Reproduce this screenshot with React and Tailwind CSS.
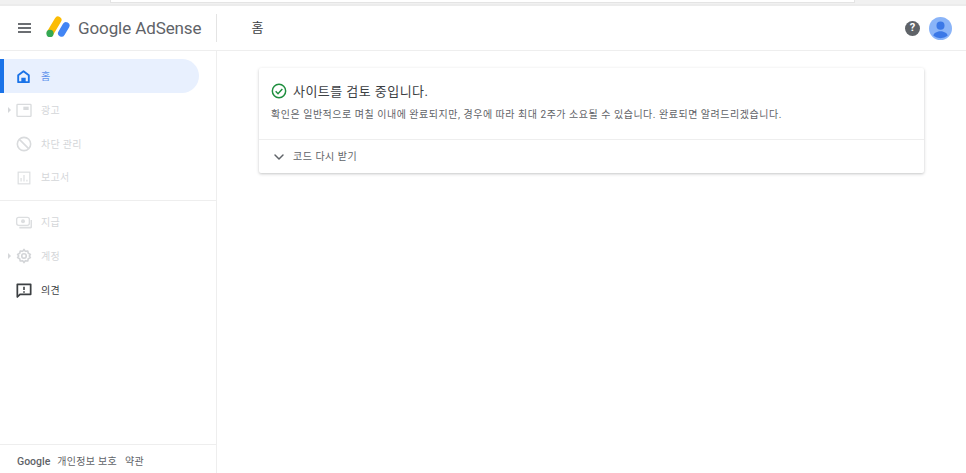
import React from 'react';
import { ChevronDown } from 'lucide-react';

const NavItem = ({ icon, label, arrow, dark, className = '' }) => (
  <div className={`flex items-center h-[34px] relative ${className}`}>
    {arrow && <span className="absolute left-[8px] top-[14px] w-0 h-0 border-y-[3px] border-y-transparent border-l-[3px] border-l-[#d5d7da]" />}
    <span className="w-[47px] flex justify-center shrink-0">{icon}</span>
    <span className={`text-[10px] tracking-[0.3px] ml-[-6px] ${dark ? 'text-[#3c4043]' : 'text-[#d4d6d9]'}`}>{label}</span>
  </div>
);

const HomeIcon = () => (
  <svg width="15" height="15" viewBox="0 0 24 24" fill="none" stroke="#1a73e8" strokeWidth="3">
    <path d="M3.5 21V10L12 3.5 20.5 10V21H3.5Z" strokeLinejoin="round" />
    <path d="M8.5 21v-7h7v7" fill="#1a73e8" stroke="none" />
  </svg>
);

const AdsIcon = () => (
  <svg width="16" height="16" viewBox="0 0 24 24" fill="none">
    <rect x="1.5" y="3.5" width="21" height="18" stroke="#d9dbdd" strokeWidth="2" rx="1" />
    <rect x="11" y="7" width="8" height="5" fill="#d9dbdd" />
  </svg>
);

const BlockIcon = () => (
  <svg width="16" height="16" viewBox="0 0 24 24" fill="none" stroke="#d9dbdd" strokeWidth="2.4">
    <circle cx="12" cy="12" r="10" />
    <path d="M5 5l14 14" />
  </svg>
);

const ReportIcon = () => (
  <svg width="14" height="14" viewBox="0 0 24 24" fill="none" stroke="#dcdee0" strokeWidth="2">
    <rect x="2" y="2" width="20" height="20" />
    <path d="M7 18v-6M12 18V7M17 18v-3" />
  </svg>
);

const PayIcon = () => (
  <svg width="16" height="16" viewBox="0 0 24 24" fill="none">
    <rect x="1" y="5" width="19" height="12" rx="3" stroke="#dcdee0" strokeWidth="2" />
    <circle cx="10.5" cy="11" r="3" fill="#dcdee0" />
    <path d="M5 20.5h16.5a1.5 1.5 0 0 0 1.5-1.5V9" stroke="#dcdee0" strokeWidth="2.4" />
  </svg>
);

const GearIcon = () => (
  <svg width="16" height="16" viewBox="0 0 24 24" fill="none" stroke="#d3d5d8" strokeWidth="2.4">
    <path d="M12 2l2 3 3.6-.6.8 3.4 3.2 1.7L20 12l1.6 2.5-3.2 1.7-.8 3.4-3.6-.6-2 3-2-3-3.6.6-.8-3.4-3.2-1.7L4 12 2.4 9.5l3.2-1.7.8-3.4 3.6.6 2-3Z" strokeLinejoin="round" />
    <circle cx="12" cy="12" r="3.4" />
  </svg>
);

const FeedbackIcon = () => (
  <svg width="16" height="16" viewBox="0 0 24 24" fill="none">
    <path d="M2 3.5h20v15H6l-4 4v-19Z" stroke="#3c4043" strokeWidth="2.6" strokeLinejoin="round" />
    <path d="M12 7v5M12 14v2" stroke="#3c4043" strokeWidth="2.4" />
  </svg>
);

const AdsenseLogo = () => (
  <svg width="24" height="22" viewBox="0 0 24 22">
    <path d="M4.5 16.5 12 4" stroke="#fbbc04" strokeWidth="7" strokeLinecap="round" />
    <path d="M15.5 17.2l4.5-7.6" stroke="#4285f4" strokeWidth="7" strokeLinecap="round" />
    <circle cx="4" cy="17.4" r="3.6" fill="#34a853" />
  </svg>
);

const CheckCircle = () => (
  <svg width="16" height="16" viewBox="0 0 24 24" fill="none" stroke="#1e8e3e" strokeWidth="2.2">
    <circle cx="12" cy="12" r="10" />
    <path d="M7 12.5l3.5 3.5L17 9" />
  </svg>
);

const Avatar = () => (
  <svg width="23" height="23" viewBox="0 0 24 24">
    <circle cx="12" cy="12" r="12" fill="#8ab4f8" />
    <circle cx="12" cy="9" r="4.2" fill="#3b78e7" />
    <path d="M4.6 19.5c0-3 4.6-4.6 7.4-4.6s7.4 1.6 7.4 4.6a12 12 0 0 1-14.8 0Z" fill="#3b78e7" />
  </svg>
);

export default function App() {
  return (
    <div className="w-[966px] h-[473px] overflow-hidden bg-white flex flex-col font-['Roboto','Noto_Sans_CJK_KR',sans-serif]">
      {/* browser strip at the top */}
      <div className="h-[6px] shrink-0 bg-[#f1f1f1] border-b-2 border-[#ececec] flex">
        <div className="w-[110px] shrink-0" />
        <div className="w-[745px] h-[3px] bg-white border-x border-b border-[#e4e4e4]" />
      </div>

      <header className="h-[45px] shrink-0 flex items-center border-b border-[#eeeeee]">
        <div className="ml-[18px] w-[13px] flex flex-col gap-[2px]">
          <span className="h-[2px] bg-[#6b6e72]" />
          <span className="h-[2px] bg-[#6b6e72]" />
          <span className="h-[2px] bg-[#6b6e72]" />
        </div>
        <div className="ml-[15px] mt-[-2px]"><AdsenseLogo /></div>
        <span className="ml-[8px] mt-[2px] text-[17px] tracking-[-0.1px] text-[#5f6368] font-['Roboto',sans-serif]">Google AdSense</span>
        <div className="w-px h-[28px] bg-[#e4e4e4] ml-[15px]" />
        <span className="ml-[34px] text-[13px] text-[#3c4043]">홈</span>
        <div className="ml-auto flex items-center gap-[9px] mr-[14px]">
          <span className="w-[15px] h-[15px] rounded-full bg-[#5f6368] text-white text-[11px] font-bold flex items-center justify-center">?</span>
          <Avatar />
        </div>
      </header>

      <div className="flex-1 flex min-h-0">
        <aside className="w-[217px] shrink-0 border-r border-[#eeeeee] flex flex-col pt-[8px]">
          <div className="w-[199px] h-[34px] flex items-center bg-[#e8f0fe] rounded-r-full border-l-[4px] border-[#1a73e8]">
            <span className="w-[39px] flex justify-center"><HomeIcon /></span>
            <span className="text-[10px] text-[#5f94ec] ml-[-2px]">홈</span>
          </div>
          <NavItem icon={<AdsIcon />} label="광고" arrow />
          <NavItem icon={<BlockIcon />} label="차단 관리" />
          <NavItem icon={<ReportIcon />} label="보고서" className="!h-[33px]" />
          <div className="h-px bg-[#eeeeee] mt-[6px] mb-[4px]" />
          <NavItem icon={<PayIcon />} label="지급" />
          <NavItem icon={<GearIcon />} label="계정" arrow />
          <NavItem icon={<FeedbackIcon />} label="의견" dark />
          <div className="mt-auto h-[29px] border-t border-[#eeeeee] flex items-center pl-[17px] pt-[5px] text-[10px] text-[#5f6368]">
            <span className="font-medium text-[10.5px]">Google</span>
            <span className="ml-[7px] tracking-[0.3px]">개인정보 보호</span>
            <span className="ml-[8px] tracking-[0.3px]">약관</span>
          </div>
        </aside>

        <main className="flex-1 pt-[17px] pl-[42px] pr-[42px]">
          <section className="h-[105px] bg-white rounded-[2px] shadow-[0_1px_3px_rgba(60,64,67,0.3)]">
            <div className="h-[72px] border-b border-[#eeeeee] px-[12px] pt-[15px]">
              <div className="flex items-center gap-[6px] h-[16px]">
                <CheckCircle />
                <span className="text-[13px] tracking-[0.45px] text-[#3c4043] translate-y-[1px]">사이트를 검토 중입니다.</span>
              </div>
              <p className="mt-[9px] text-[10px] tracking-[0.52px] leading-[14px] text-[#5f6368]">확인은 일반적으로 며칠 이내에 완료되지만, 경우에 따라 최대 2주가 소요될 수 있습니다. 완료되면 알려드리겠습니다.</p>
            </div>
            <div className="h-[33px] flex items-center pl-[12px]">
              <ChevronDown className="w-[16px] h-[16px] text-[#5f6368]" strokeWidth={2.2} />
              <span className="ml-[6px] text-[10px] tracking-[0.5px] text-[#5f6368]">코드 다시 받기</span>
            </div>
          </section>
        </main>
      </div>
    </div>
  );
}
